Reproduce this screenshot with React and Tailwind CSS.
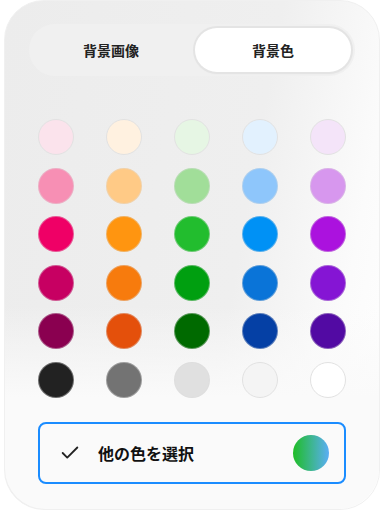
import { Check } from 'lucide-react'

const ROWS = [
  ['#fbe3ec', '#fff1e0', '#e6f6e4', '#e2f1fe', '#f4e4f9'],
  ['#f78fb4', '#ffca86', '#a1de99', '#8ec6fb', '#d797ee'],
  ['#ef0066', '#ff9510', '#22bd2e', '#0091f5', '#ab12de'],
  ['#c70062', '#f77b0d', '#009f10', '#0a74d8', '#8515d4'],
  ['#8a0050', '#e4500b', '#006a00', '#0540a5', '#520aa3'],
  ['#222222', '#737373', '#e0e0e0', '#f4f4f4', '#ffffff'],
]

const LIGHT = ['#fbe3ec', '#fff1e0', '#e6f6e4', '#e2f1fe', '#f4e4f9', '#f4f4f4', '#ffffff']

export default function App() {
  return (
    <div
      className="w-[384px] h-[513px] bg-white overflow-hidden"
      style={{ fontFamily: '"Noto Sans CJK JP", "Noto Sans", sans-serif' }}
    >
      <div className="mx-[4px] h-[510px] rounded-[40px] border border-[#f0f0f0] bg-[linear-gradient(100deg,#ececec_0%,#efefef_60%,#fbfbfb_85%,#ffffff_100%)] flex flex-col">
        <div className="flex-1 rounded-[40px] bg-[linear-gradient(180deg,rgba(255,255,255,0)_0%,rgba(255,255,255,0)_60%,rgba(250,250,250,1)_78%,#fafafa_100%)] flex flex-col">
          {/* Tabs */}
          <div className="mt-[23px] mx-[24px] h-[52px] rounded-full bg-[#f0f0f0] flex items-center gap-[6px] p-[4px]">
            <button className="flex-1 h-full text-[14px] font-bold text-[#222]">背景画像</button>
            <button className="flex-1 h-full rounded-full bg-white text-[14px] font-bold text-[#222] shadow-[0_0_0_2px_#e4e4e4,0_1px_3px_rgba(0,0,0,0.08)]">
              背景色
            </button>
          </div>

          {/* Swatches */}
          <div className="mt-[43px] ml-[33px] mr-[33px] grid grid-cols-5 gap-y-[12.5px] gap-x-[32.5px]">
            {ROWS.flat().map((c, i) => (
              <div
                key={i}
                className={
                  'w-[36px] h-[36px] rounded-full ' +
                  (LIGHT.includes(c) ? 'border border-[#e2e2e2]' : 'border border-[#dddddd]/40')
                }
                style={{ backgroundColor: c }}
              />
            ))}
          </div>

          {/* Custom color */}
          <div className="mt-[24px] mx-[33px] h-[62px] rounded-[8px] border-2 border-[#1a8cff] bg-[#fafafa] flex items-center pl-[19px] pr-[15px]">
            <Check size={22} strokeWidth={2} className="text-[#222]" />
            <span className="ml-[17px] text-[16px] font-bold text-[#111]">他の色を選択</span>
            <div className="ml-auto w-[36px] h-[36px] rounded-full bg-[linear-gradient(90deg,#1fbd26,#5aaef5)]" />
          </div>
        </div>
      </div>
    </div>
  )
}
